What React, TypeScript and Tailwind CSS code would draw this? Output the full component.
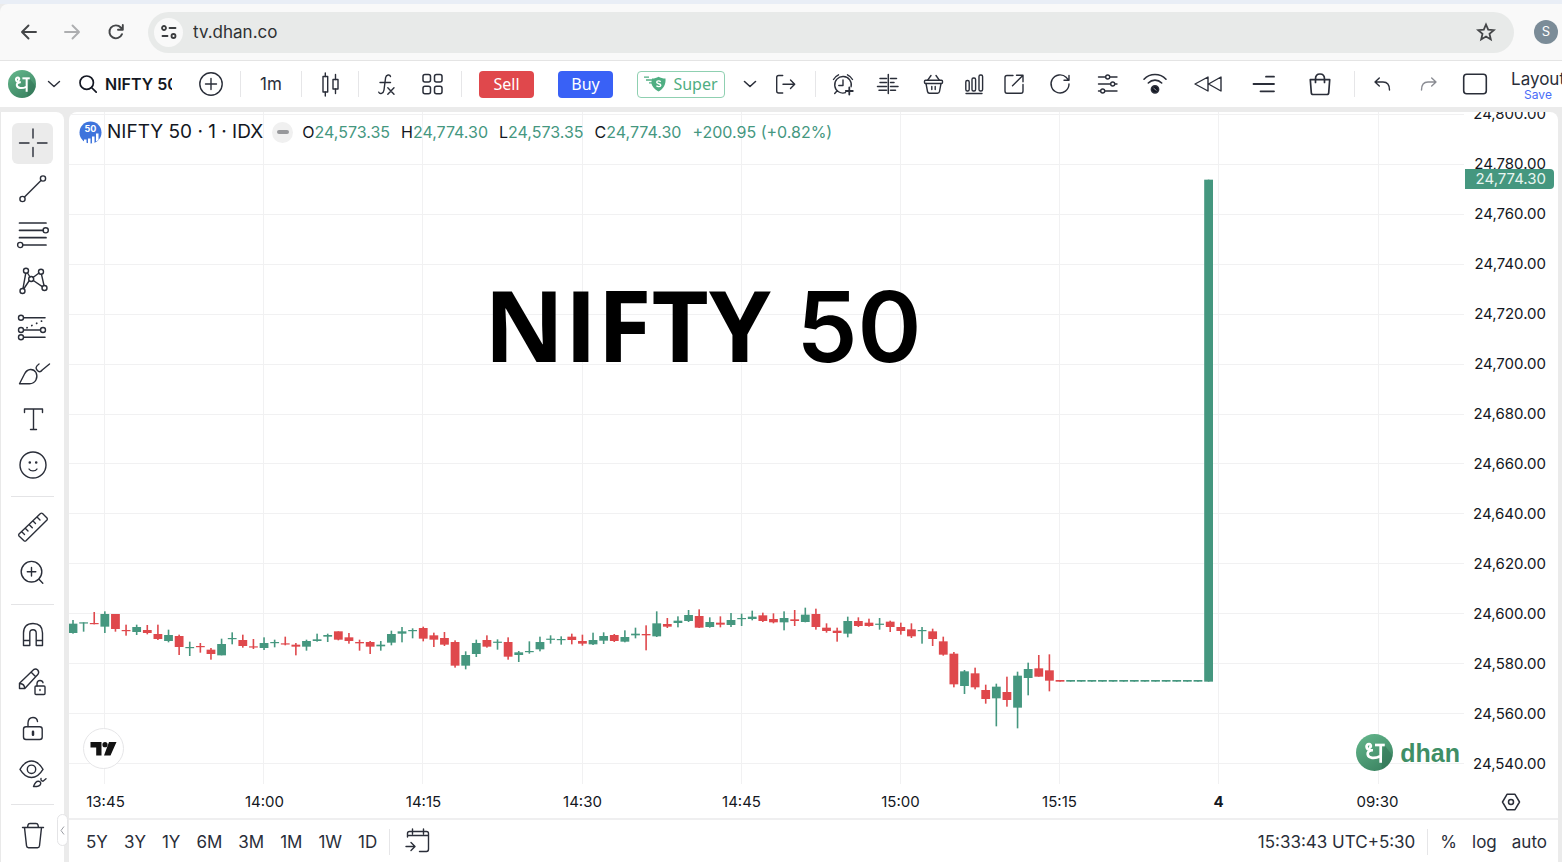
import type { ReactNode } from "react";
import clsx from "clsx";

const GREEN = "#45977f";
const RED = "#df484c";

// plot geometry
const FIRST_X = 4;
const STEP_X = 10.613;
const BASE_Y = 478;
const GRID_TOP = 2.5;
const GRID_STEP_Y = 49.92;
const GRID_LEFT = 35.5;
const GRID_STEP_X = 159.2;

type Candle = [string, number, number, number, number];

// direction, high, body top, body bottom, low (three units to a pixel)
const candles: Candle[] = [
    ["g", 90, 101, 129, 131], ["g", 97, 97, 99, 125], ["r", 66, 99, 102, 103], ["g", 64, 72, 110, 129],
    ["r", 72, 72, 117, 125], ["r", 104, 120, 123, 137], ["g", 104, 111, 126, 135], ["r", 105, 120, 129, 133],
    ["r", 104, 132, 147, 150], ["g", 119, 135, 153, 157], ["r", 134, 138, 171, 195], ["g", 155, 171, 174, 198],
    ["r", 159, 168, 170, 188], ["r", 174, 179, 192, 209], ["g", 146, 162, 196, 196], ["g", 127, 144, 147, 163],
    ["r", 134, 150, 168, 173], ["r", 147, 169, 172, 177], ["g", 142, 159, 174, 180], ["g", 149, 156, 159, 172],
    ["r", 140, 160, 163, 166], ["r", 159, 164, 170, 196], ["g", 149, 153, 170, 182], ["g", 131, 148, 153, 155],
    ["g", 131, 135, 140, 156], ["r", 124, 124, 149, 151], ["r", 129, 142, 153, 161], ["r", 149, 156, 160, 182],
    ["r", 153, 156, 170, 192], ["g", 153, 164, 169, 182], ["g", 122, 132, 158, 166], ["g", 111, 124, 131, 157],
    ["g", 115, 120, 122, 145], ["r", 110, 114, 146, 154], ["r", 128, 136, 149, 171], ["r", 126, 144, 164, 168],
    ["r", 151, 156, 227, 233], ["g", 184, 195, 227, 238], ["g", 149, 159, 192, 201], ["r", 136, 150, 170, 173],
    ["g", 148, 155, 157, 179], ["r", 142, 156, 200, 209], ["g", 183, 187, 195, 216], ["g", 154, 183, 185, 191],
    ["g", 140, 156, 178, 184], ["g", 136, 146, 149, 161], ["g", 139, 147, 149, 164], ["r", 131, 140, 150, 163],
    ["r", 134, 153, 161, 167], ["g", 128, 150, 163, 165], ["g", 127, 138, 152, 162], ["r", 132, 135, 153, 156],
    ["g", 121, 141, 155, 157], ["g", 113, 131, 136, 145], ["r", 106, 132, 136, 181], ["g", 64, 100, 139, 141],
    ["r", 84, 102, 110, 114], ["g", 79, 92, 99, 112], ["g", 60, 75, 93, 96], ["r", 58, 78, 113, 114],
    ["g", 82, 96, 111, 113], ["r", 79, 98, 104, 112], ["g", 69, 90, 105, 111], ["g", 71, 84, 87, 108],
    ["g", 62, 80, 87, 91], ["r", 68, 76, 93, 96], ["r", 70, 87, 97, 100], ["g", 64, 84, 97, 121],
    ["r", 60, 88, 93, 108], ["g", 53, 74, 96, 97], ["r", 56, 72, 111, 119], ["r", 100, 113, 123, 128],
    ["r", 113, 122, 129, 155], ["g", 80, 93, 131, 142], ["r", 82, 93, 108, 111], ["r", 86, 98, 108, 110],
    ["g", 84, 101, 104, 119], ["r", 92, 95, 111, 126], ["r", 98, 111, 123, 134], ["r", 100, 118, 139, 144],
    ["g", 111, 120, 123, 161], ["r", 116, 124, 147, 168], ["r", 140, 154, 194, 197], ["r", 186, 191, 283, 292],
    ["g", 240, 244, 288, 312], ["r", 233, 250, 292, 298], ["r", 284, 300, 327, 341], ["g", 281, 290, 325, 409],
    ["r", 260, 306, 330, 350], ["g", 245, 257, 353, 415], ["g", 218, 237, 264, 316], ["r", 195, 235, 260, 260],
    ["r", 193, 241, 272, 304], ["r", 270, 270, 275, 275],
    ...Array.from({ length: 13 }, (): Candle => ["g", 270, 270, 275, 275]),
    ["g", -1231, -1231, 275, 275],
];

const prices = Array.from({ length: 14 }, (_, i) => `24,${800 - i * 20}.00`);
const times = ["13:45", "14:00", "14:15", "14:30", "14:45", "15:00", "15:15", "4", "09:30"];
const ranges = ["5Y", "3Y", "1Y", "6M", "3M", "1M", "1W", "1D"];
const quotes = [
    { name: "O", value: "24,573.35" },
    { name: "H", value: "24,774.30" },
    { name: "L", value: "24,573.35" },
    { name: "C", value: "24,774.30" },
];

function Icon({ size = 32, width = 1.4, children }: { size?: number; width?: number; children: ReactNode }) {
    return (
        <svg width={size} height={size} viewBox={`0 0 ${size} ${size}`} fill="none" stroke="currentColor" strokeWidth={width} strokeLinecap="round" strokeLinejoin="round" className="shrink-0">
            {children}
        </svg>
    );
}

function ToolButton({ label, className, children }: { label: string; className?: string; children: ReactNode }) {
    return (
        <button type="button" aria-label={label} className={clsx("flex h-10 shrink-0 items-center justify-center", className)}>
            {children}
        </button>
    );
}

function Divider({ className }: { className?: string }) {
    return <div className={clsx("h-[26px] w-px shrink-0 bg-[#e6e6e8]", className)} />;
}

function DhanLogo({ size }: { size: number }) {
    return (
        <svg width={size} height={size} viewBox="0 0 36 36" fill="none" className="shrink-0">
            <defs>
                <linearGradient id="dhan" x1="0.2" y1="0" x2="0.8" y2="1">
                    <stop offset="0" stopColor="#62b48a" />
                    <stop offset="1" stopColor="#3a8260" />
                </linearGradient>
            </defs>
            <circle cx="18" cy="18" r="18" fill="url(#dhan)" />
            <path d="M27 10l8.500 11A18 18 0 0 1 25 34.500V28z" fill="#2f7153" opacity="0.5" />
            <g stroke="#fff" strokeWidth="2.600" strokeLinecap="butt">
                <path d="M18.500 10.700H28" />
                <path d="M24 10.700V28" />
                <path d="M12.500 13.200c2.300.4 2.800-3.200.2-3.400-3.300-.2-3.800 5.500 1.800 6h2M15 16c-2.800.3-4 1.900-3.600 4 .7 3.600 6.600 4.300 12.100 1.600" />
            </g>
        </svg>
    );
}

function BrowserBar() {
    return (
        <header className="flex h-14 shrink-0 items-center rounded-tl-lg bg-[#f9f9f9] pl-[13px] text-[#444648]">
            <ToolButton label="Back" className="w-8">
                <Icon width={1.900}><path d="M23 16H9.500M15.500 9.500L9 16l6.500 6.500" /></Icon>
            </ToolButton>
            <ToolButton label="Forward" className="ml-[11px] w-8 text-[#adaeb0]">
                <Icon width={1.900}><path d="M9 16h13.500M16.500 9.500L23 16l-6.500 6.500" /></Icon>
            </ToolButton>
            <ToolButton label="Reload" className="ml-3 w-8">
                <Icon width={1.900}><path d="M22 18.200A6.500 6.500 0 1 1 20.800 11.500L22.500 13.300M22.800 9v4.800H18" /></Icon>
            </ToolButton>
            <div className="ml-4 mr-5 flex h-[41px] flex-1 items-center rounded-full bg-[#e8eae9] pl-[6px] pr-3">
                <button type="button" aria-label="Site information" className="flex h-[29px] w-[29px] items-center justify-center rounded-full bg-[#f9f9f9]">
                    <svg width="18" height="18" viewBox="0 0 18 18" fill="none" stroke="#3a3c3e" strokeWidth="1.800" strokeLinecap="round">
                        <circle cx="4" cy="5" r="2" /><path d="M9.500 5h6M2.500 13h5" /><circle cx="13.500" cy="13" r="2" />
                    </svg>
                </button>
                <input aria-label="Address" defaultValue="tv.dhan.co" className="ml-[10px] min-w-0 flex-1 bg-transparent pt-0.5 text-[17px] text-[#2f3133] outline-none" />
                <ToolButton label="Bookmark" className="w-8">
                    <Icon width={1.800}><path strokeLinejoin="miter" d="M16 8.500l2.200 5.200 5.600.5-4.300 3.700 1.300 5.500-4.800-2.900-4.800 2.900 1.300-5.500-4.300-3.700 5.600-.5z" /></Icon>
                </ToolButton>
            </div>
            <button type="button" aria-label="Profile" className="mr-1 flex h-6 w-6 items-center justify-center rounded-full bg-[#7b8c98] text-[13px] text-white">S</button>
        </header>
    );
}

function Toolbar() {
    return (
        <nav className="flex h-[47px] shrink-0 items-center overflow-hidden border-t border-[#e4e4e4] bg-white pl-2 text-[#2a2e39]">
            <DhanLogo size={28} />
            <ToolButton label="Menu" className="w-9">
                <Icon><path d="M10.500 13.500l5.500 5 5.500-5" /></Icon>
            </ToolButton>
            <button type="button" className="flex w-[100px] shrink-0 items-center gap-2 overflow-hidden pl-[7px] text-[#131722]">
                <svg width="18" height="18" viewBox="0 0 18 18" fill="none" stroke="currentColor" strokeWidth="1.700" strokeLinecap="round" className="shrink-0">
                    <circle cx="7.700" cy="7.700" r="6.700" /><path d="M12.500 12.500l4.700 4.700" />
                </svg>
                <span className="whitespace-nowrap text-base font-semibold">NIFTY 50</span>
            </button>
            <ToolButton label="Compare" className="ml-[10px] w-[58px]">
                <Icon><circle cx="16" cy="16" r="11.200" /><path d="M16 10.500v11M10.500 16h11" /></Icon>
            </ToolButton>
            <Divider />
            <ToolButton label="Interval" className="w-[60px] pt-0.5 text-[17px]">1m</ToolButton>
            <Divider />
            <ToolButton label="Chart type" className="w-14">
                <Icon><rect x="9" y="8.500" width="4.700" height="15.500" /><path d="M11.300 5v3.500M11.300 24v4M21.500 6.500v5M21.500 21v4.500" /><rect x="19" y="11.500" width="5" height="9.500" /></Icon>
            </ToolButton>
            <Divider />
            <ToolButton label="Indicators" className="ml-1 w-[46px]">
                <Icon><path d="M20.500 8.500c-.5-2.200-4.300-2.300-4.900 1.200L14 22c-.5 3.800-4.200 4.500-5.200 2.200M10 14.500h10.500M17.800 19.800l6.200 6.400M24 19.800l-6.200 6.400" /></Icon>
            </ToolButton>
            <ToolButton label="Templates" className="w-[46px]">
                <Icon width={1.500}>
                    <rect x="7" y="6.500" width="7.500" height="7.500" rx="2" /><rect x="18.500" y="6.500" width="7.500" height="7.500" rx="2" />
                    <rect x="7" y="18.200" width="7.500" height="7.500" rx="2" /><rect x="18.500" y="18.200" width="7.500" height="7.500" rx="2" />
                </Icon>
            </ToolButton>
            <Divider className="ml-1.5" />
            <button type="button" className="ml-[17px] h-[27px] w-[55px] shrink-0 rounded bg-[#e0484c] font-['Noto_Sans',sans-serif] text-base leading-[26px] text-white">Sell</button>
            <button type="button" className="ml-6 h-[27px] w-[55px] shrink-0 rounded bg-[#3961f6] font-['Noto_Sans',sans-serif] text-base leading-[26px] text-white">Buy</button>
            <button type="button" className="ml-6 flex h-[27px] w-[88px] shrink-0 items-center justify-center gap-[7px] rounded border border-[#8fd0b1] font-['Noto_Sans',sans-serif] text-base leading-[26px] text-[#4fae82]">
                <svg width="22" height="16" viewBox="0 0 22 16" fill="none" className="shrink-0">
                    <path d="M8 2.500c2.700 0 4.500-.8 6.500-1.800C16.500 1.700 18.800 2.500 21.500 2.500 22 8.500 19.500 13 14.500 15.500 10.500 13.500 8 10.500 7.300 7z" fill="#4fae82" />
                    <path d="M0 1.200h5M2 4h7M5 6.800h4" stroke="#4fae82" strokeWidth="1.300" />
                    <path d="M16.600 5.800c-.8-1.300-3.900-1.200-3.900.5 0 1.900 4.100.9 4.100 2.900 0 1.700-3.400 1.900-4.300.4" stroke="#fff" strokeWidth="1.400" />
                </svg>
                Super
            </button>
            <ToolButton label="More orders" className="ml-[7px] w-9">
                <Icon width={1.600}><path d="M10.500 13.500l5.500 5 5.500-5" /></Icon>
            </ToolButton>
            <ToolButton label="Exit" className="w-9">
                <Icon><path d="M12.700 7.500H8.700q-2 0-2 2v13.500q0 2 2 2h4M13 16.200h11.500M20.500 12l4.200 4.200-4.200 4.200" /></Icon>
            </ToolButton>
            <Divider className="ml-[11px]" />
            <ToolButton label="Alert" className="ml-1 w-[46px]">
                <Icon><path d="M18.500 24.700a8.300 8.300 0 1 1 5.600-6M16 12v5.500h-4.200M6.500 11.500a11 11 0 0 1 5-4.700M20.500 6.800a11 11 0 0 1 5 4.700M9.500 23.500l-1.800 2" /><path d="M22.300 19.500v7M18.800 23h7" strokeWidth="1.800" /></Icon>
            </ToolButton>
            <ToolButton label="Depth" className="w-11">
                <Icon width={1.500}><path d="M16.300 6.500v19M8 10.500h6.500M8 14.500h6.500M5.500 18.500h9M7 22.300h7.500M18.500 10.500h6M18.500 14.500h3.500M18.500 18.500H26M18.500 22.300h5" /></Icon>
            </ToolButton>
            <ToolButton label="Basket" className="w-[46px]">
                <Icon><rect x="7.500" y="12.300" width="18" height="3.200" rx="1" /><path d="M9 15.500l1.500 8q.3 1.700 2 1.700h8q1.700 0 2-1.700l1.500-8M10.500 12.300l3.500-4.800M22.500 12.300L19 7.500M14.800 18.500v3M18.200 18.500v3" /></Icon>
            </ToolButton>
            <ToolButton label="Open interest" className="w-9">
                <Icon><rect x="7.800" y="12.500" width="3.400" height="10.500" rx="1.500" /><rect x="14" y="10" width="3.600" height="13" rx="1.500" /><rect x="21" y="7" width="3.600" height="16" rx="1.500" /><path d="M8 25.500h16" /></Icon>
            </ToolButton>
            <ToolButton label="Pop out" className="w-11">
                <Icon><path d="M15 7.500H9q-2 0-2 2V23q0 2.300 2 2.300h14q2 0 2-2.300v-6.500M14.500 17.800L24.800 7.500M18.500 7.300H25v6.500" /></Icon>
            </ToolButton>
            <ToolButton label="Refresh" className="w-12">
                <Icon><path d="M25 16a9 9 0 1 1-2.600-6.400L24.500 12M25 7.500v4.800h-5" /></Icon>
            </ToolButton>
            <ToolButton label="Settings" className="w-[46px]">
                <Icon><path d="M7.500 9h7M19 9h7M7.500 16h12M24 16h2M7.500 23h2M14 23h12" /><circle cx="16.700" cy="9" r="2" /><circle cx="21.700" cy="16" r="2" /><circle cx="11.700" cy="23" r="2" /></Icon>
            </ToolButton>
            <ToolButton label="Signals" className="w-[50px]">
                <Icon width={1.600}><path d="M5 11.200c6-6.300 16-6.300 22 0M9.300 15c3.700-3.800 9.700-3.800 13.400 0" /><circle cx="16" cy="21.300" r="3.600" fill="#131722" /><path d="M14.800 20.300l2.400 2" stroke="#9a9ca3" strokeWidth="1" /></Icon>
            </ToolButton>
            <ToolButton label="Replay" className="w-14">
                <Icon><path d="M16 9v14L3 16zM29 9v14l-12.500-7z" /></Icon>
            </ToolButton>
            <ToolButton label="Levels" className="w-14">
                <Icon width={1.800}><path d="M18 8.700h8M5.500 16h20.500M12.500 23.300H26" /></Icon>
            </ToolButton>
            <ToolButton label="Orders" className="w-14">
                <Icon width={1.700}><path d="M6.300 11.700h19.400l-1 13q-.1 1.800-1.800 1.800H9.100q-1.700 0-1.800-1.800zM11.500 14.500V11q0-5 4.500-5t4.500 5v3.500" /></Icon>
            </ToolButton>
            <Divider className="ml-1.5" />
            <ToolButton label="Undo" className="ml-1 w-[46px]">
                <Icon><path d="M13.300 10L9 14l4.300 4M9 14h8q6.500 0 6.500 8" /></Icon>
            </ToolButton>
            <ToolButton label="Redo" className="w-[46px] text-[#8a8c93]">
                <Icon><path d="M19.700 10l4.300 4-4.300 4M24 14h-8q-6.500 0-6.500 8" /></Icon>
            </ToolButton>
            <ToolButton label="Layout grid" className="w-12">
                <Icon width={1.600}><rect x="4.700" y="6.200" width="22.600" height="19.600" rx="3" /></Icon>
            </ToolButton>
            <button type="button" className="ml-3 flex w-[54px] shrink-0 flex-col items-center pt-0.5">
                <span className="text-[17px] leading-[18px]">Layout</span>
                <span className="text-xs leading-[13px] text-[#4a6cf7]">Save</span>
            </button>
        </nav>
    );
}

const sidebarGroups: { label: string; icon: ReactNode }[][] = [
    [
        { label: "Cross", icon: <path d="M18 4v9M18 22.500v9M4.500 18H14M22.500 18H32" /> },
        { label: "Trend line", icon: <><circle cx="28" cy="7.500" r="2.600" /><circle cx="7.500" cy="28" r="2.600" /><path d="M9.500 26L26 9.500" /></> },
        { label: "Fib retracement", icon: <><path d="M4.500 6H31M4.500 13.300h23.800M4.500 20.700H31M7.800 28H31" strokeWidth="1.700" /><circle cx="30.700" cy="13.300" r="2.600" /><circle cx="5.200" cy="28" r="2.600" /></> },
        { label: "Patterns", icon: <><path d="M10.700 10.500L8 25.300M12.500 10l2.500 4M18 14.500l6-4.500M18.300 17.500l9 6.200M26.500 11.500l2.500 11M14 18l-5 7.500" /><circle cx="11" cy="7.700" r="2.500" /><circle cx="26" cy="8.700" r="2.500" /><circle cx="16.200" cy="16" r="2.500" /><circle cx="29.500" cy="25" r="2.500" /><circle cx="7.500" cy="28" r="2.500" /></> },
        { label: "Prediction", icon: <><path d="M8.700 8.700H30M8.700 21h16.700M8.700 28.300H30" strokeWidth="1.600" /><circle cx="6" cy="8.700" r="2.500" /><circle cx="6" cy="21" r="2.500" /><circle cx="28" cy="21" r="2.500" /><circle cx="6" cy="28.300" r="2.500" /><path d="M12 18.700L29 11" strokeDasharray="0.100 5.200" strokeWidth="1.800" /></> },
        { label: "Brush", icon: <path d="M4.500 28.700L9.500 19c3-6 9-5.500 11.500-1.500 2.500 5-.5 11.200-6.500 11.200zM24 9c-3.500 2.500-3.500 4.500-1.800 6.200 1.600 1.900 3.300 2.300 5-.2L34.500 9" /> },
        { label: "Text", icon: <path d="M9.500 11.500V8h18v3.500M18.500 8v20.500M15.500 28.500h6" /> },
        { label: "Emoji", icon: <><circle cx="18" cy="18" r="13" /><path d="M14 22c1.500 2.500 6.500 2.500 8 0" /><circle cx="14.800" cy="15.500" r="0.600" fill="currentColor" /><circle cx="21.200" cy="15.500" r="0.600" fill="currentColor" /></> },
    ],
    [
        { label: "Measure", icon: <path d="M25.500 4.500q1-.8 2 0l4.500 4.500q.8 1 0 2L11 31.700q-1 .8-2 0L4 27q-.8-1 0-2zM22 8l3 3M18 12l2.500 2.500M14.300 15.700l3 3M10.500 19.500L13 22M7 23l2.500 2.500" /> },
        { label: "Zoom", icon: <><circle cx="16.500" cy="16.700" r="10.300" /><path d="M24 24.300l3.800 4M16.500 12.500v8.500M12.300 16.700h8.500" /></> },
    ],
    [
        { label: "Magnet", icon: <path d="M8.500 28.500V16q0-9.500 9.500-9.500t9.500 9.500v12.500h-6.300V16q0-3.300-3.200-3.300T14.800 16v12.500zM8.500 23.500h6.300M21.200 23.500h6.300" /> },
        { label: "Stay in drawing mode", icon: <><path d="M4.500 25.500v-5.300L18.500 6.700q2.300-1.500 4.200.3 1.800 2 .3 4.200L9.800 25.500zM16 9l4.700 4.700M5 20.500q4.500.5 4.700 4.700" /><rect x="20" y="23" width="10" height="8.500" rx="1" /><path d="M22 23v-2.500q.3-3 3-3 2.500 0 3 2.200M25 26.500v1" /></> },
        { label: "Lock drawings", icon: <><rect x="8.500" y="17.700" width="18.700" height="12.800" rx="2.500" /><path d="M13 17.500V14q.2-5.500 5-5.500 4 0 4.500 4" /><path d="M18 22.700v3" strokeWidth="2.500" /></> },
        { label: "Hide drawings", icon: <><path d="M5 14.300q5-8.300 11.500-8.300T28 14.300q-5 8.200-11.500 8.200T5 14.300z" /><circle cx="16.500" cy="14.300" r="4.200" /><path d="M18.500 31.500q2-5.500 5-5.200 3 .7 2 3-1.500 2.500-7 2.200zM26 23.500q-.5 2.500 2 2.700l3-2.500" /></> },
    ],
    [
        { label: "Remove", icon: <path d="M7.500 10.500h21M12.500 10.500l.5-2.500q.3-1.500 2-1.500h6q1.700 0 2 1.500l.5 2.500M9.500 10.700l2 18q.2 2 2 2h9q1.800 0 2-2l2-18" /> },
    ],
];

function Sidebar() {
    return (
        <aside className="relative flex w-16 shrink-0 flex-col rounded-tr-lg border-l border-[#e9e9e9] bg-white pt-2 text-[#2a2e39]">
            {sidebarGroups.map((group, i) => (
                <div key={i}>
                    {i > 0 && <div className="mx-[10px] mb-[7px] mt-2 h-px bg-[#e4e4e6]" />}
                    {group.map((tool, j) => (
                        <ToolButton key={tool.label} label={tool.label} className="h-[46px]! w-full">
                            <span className={clsx("flex h-[41px] w-[41px] items-center justify-center rounded-md", i === 0 && j === 0 && "bg-[#ebebeb]")}>
                                <Icon size={36}>{tool.icon}</Icon>
                            </span>
                        </ToolButton>
                    ))}
                </div>
            ))}
            <button type="button" aria-label="Collapse" className="absolute -right-1 bottom-4 flex h-8 w-[11px] items-center justify-center rounded-md border border-[#e4e4e6] bg-white text-[#9a9ca3]">
                <svg width="5" height="9" viewBox="0 0 5 9" fill="none" stroke="currentColor"><path d="M4 0.500L1 4.500l3 4" /></svg>
            </button>
        </aside>
    );
}

function Plot() {
    return (
        <svg className="absolute h-full w-full">
            <g stroke="#f1f1f2">
                {prices.map((price, i) => (
                    <line key={price} x1="0" x2="100%" y1={Math.floor(GRID_TOP + i * GRID_STEP_Y) + 0.5} y2={Math.floor(GRID_TOP + i * GRID_STEP_Y) + 0.5} />
                ))}
                {times.map((time, i) => (
                    <line key={time} y1="0" y2="100%" x1={Math.floor(GRID_LEFT + i * GRID_STEP_X) + 0.5} x2={Math.floor(GRID_LEFT + i * GRID_STEP_X) + 0.5} />
                ))}
            </g>
            {candles.map(([dir, high, top, bottom, low], i) => {
                const x = FIRST_X + i * STEP_X;
                const height = Math.max((bottom - top) / 3, 1.2);
                return (
                    <g key={i} fill={dir === "g" ? GREEN : RED}>
                        <rect x={x - 0.8} y={BASE_Y + high / 3} width="1.600" height={Math.max((low - high) / 3, 1)} />
                        <rect x={x - 4.4} y={BASE_Y + top / 3} width="8.800" height={height} />
                    </g>
                );
            })}
        </svg>
    );
}

function Legend() {
    return (
        <div className="absolute left-[10px] top-2 flex items-center whitespace-nowrap text-[#131722]">
            <svg width="23" height="23" viewBox="0 0 23 23" className="shrink-0">
                <circle cx="11.500" cy="11.500" r="11" fill="#3e74dc" />
                <path d="M5 22v-3.500h2.500V22zM9 23v-5.500h2.500V23zM13 23v-7.500h2.500V22zM17 20.500v-8h2.500V19z" fill="#fff" />
                <text x="11.500" y="10.500" textAnchor="middle" fontSize="9" fontWeight="700" fill="#fff">50</text>
            </svg>
            <span className="ml-[5px] text-[19px] leading-6">NIFTY 50 · 1 · IDX</span>
            <span className="ml-[9px] flex h-[21px] w-[21px] items-center justify-center rounded-full bg-[#f0f0f0]">
                <span className="h-1 w-3 rounded-full bg-[#97989b]" />
            </span>
            <div className="ml-[9px] flex gap-[11px] text-base leading-6">
                {quotes.map((quote) => (
                    <span key={quote.name}>{quote.name}<span className="text-[#45977f]">{quote.value}</span></span>
                ))}
                <span className="text-[#45977f]">+200.95 (+0.82%)</span>
            </div>
        </div>
    );
}

function Chart() {
    return (
        <main className="ml-[5px] mr-1 flex min-w-0 flex-1 flex-col overflow-hidden rounded-t-lg bg-white">
            <div className="flex min-h-0 flex-1">
                <div className="relative min-w-0 flex-1 overflow-hidden">
                    <Plot />
                    <Legend />
                    <h1 className="absolute left-[415px] top-[152px] whitespace-nowrap font-['Open_Sans',sans-serif] text-[99px] font-bold leading-[120px] text-black">
                        NIFTY <span className="font-['Inter',sans-serif] text-[97px] font-semibold">50</span>
                    </h1>
                    <a href="#" aria-label="TradingView" className="absolute bottom-[15px] left-[14px] flex h-[41px] w-[41px] items-center justify-center rounded-full border border-[#e6e6e8] bg-white">
                        <svg width="27" height="15" viewBox="0 0 27 15" fill="#131313">
                            <path d="M0.500 1h11v13.500H6.200V6.500H0.500zM19 1h7.500L20.500 14.500h-6.500z" /><circle cx="15" cy="3.700" r="2.600" />
                        </svg>
                    </a>
                    <div className="absolute bottom-[13px] right-1 flex items-center gap-[7px]">
                        <DhanLogo size={37} />
                        <span className="font-['Liberation_Sans',sans-serif] text-[25px] font-bold leading-8 text-[#3f8f66]">dhan</span>
                    </div>
                </div>
                <div className="relative w-[94px] shrink-0 overflow-hidden text-[15px] text-[#131722]">
                    <div className="-mt-[23px] flex flex-col">
                        {prices.map((price) => (
                            <span key={price} className="h-[50px] pr-[12px] text-right leading-[50px]">{price}</span>
                        ))}
                    </div>
                    <span className="absolute left-px top-[57px] h-5 w-[89px] rounded-r-sm bg-[#45977f] pr-2 text-right leading-5 text-[#e9f5f1]">24,774.30</span>
                </div>
            </div>
            <div className="flex h-[34px] shrink-0 items-center pt-0.5 text-[15px] text-[#131722]">
                <div className="flex min-w-0 flex-1 overflow-hidden">
                    {times.map((time) => (
                        <span key={time} className={clsx("w-[159px] shrink-0 text-center first:-ml-[43px]", time === "4" && "font-bold")}>{time}</span>
                    ))}
                </div>
                <ToolButton label="Axis settings" className="w-[94px]">
                    <svg width="20" height="18" viewBox="0 0 20 18" fill="none" stroke="#2a2e39" strokeWidth="1.500" strokeLinejoin="round">
                        <path d="M6 1.300h8L18.500 9 14 16.700H6L1.500 9z" /><circle cx="10" cy="9" r="2.500" />
                    </svg>
                </ToolButton>
            </div>
            <footer className="flex h-11 shrink-0 items-center whitespace-nowrap border-t-2 border-[#efeff0] pl-[17px] pr-[11px] pt-0.5 text-[17px] leading-8 text-[#2a2e39]">
                <div className="flex gap-4">
                    {ranges.map((range) => (
                        <button key={range} type="button">{range}</button>
                    ))}
                </div>
                <Divider className="ml-3" />
                <ToolButton label="Go to date" className="ml-3 w-8">
                    <Icon><path d="M5.500 11V7.500q0-2 2-2h17q2 0 2 2V23q0 2.500-2 2.500h-7M5.500 9.500h21M10.500 3v5M21.500 3v5M4 20.500h8.500M9 16.500l4 4-4 4" /></Icon>
                </ToolButton>
                <div className="flex-1" />
                <button type="button">15:33:43 UTC+5:30</button>
                <Divider className="ml-3" />
                <div className="ml-3 flex gap-[15px]">
                    <button type="button">%</button>
                    <button type="button">log</button>
                    <button type="button">auto</button>
                </div>
            </footer>
        </main>
    );
}

function App() {
    return (
        <div className="flex h-screen flex-col overflow-hidden bg-[#ebebeb] font-['Inter',sans-serif]">
            <div className="h-1 shrink-0 bg-[#e9eef6]" />
            <BrowserBar />
            <Toolbar />
            <div className="mt-[5px] flex min-h-0 flex-1">
                <Sidebar />
                <Chart />
            </div>
        </div>
    );
}

export default App;
